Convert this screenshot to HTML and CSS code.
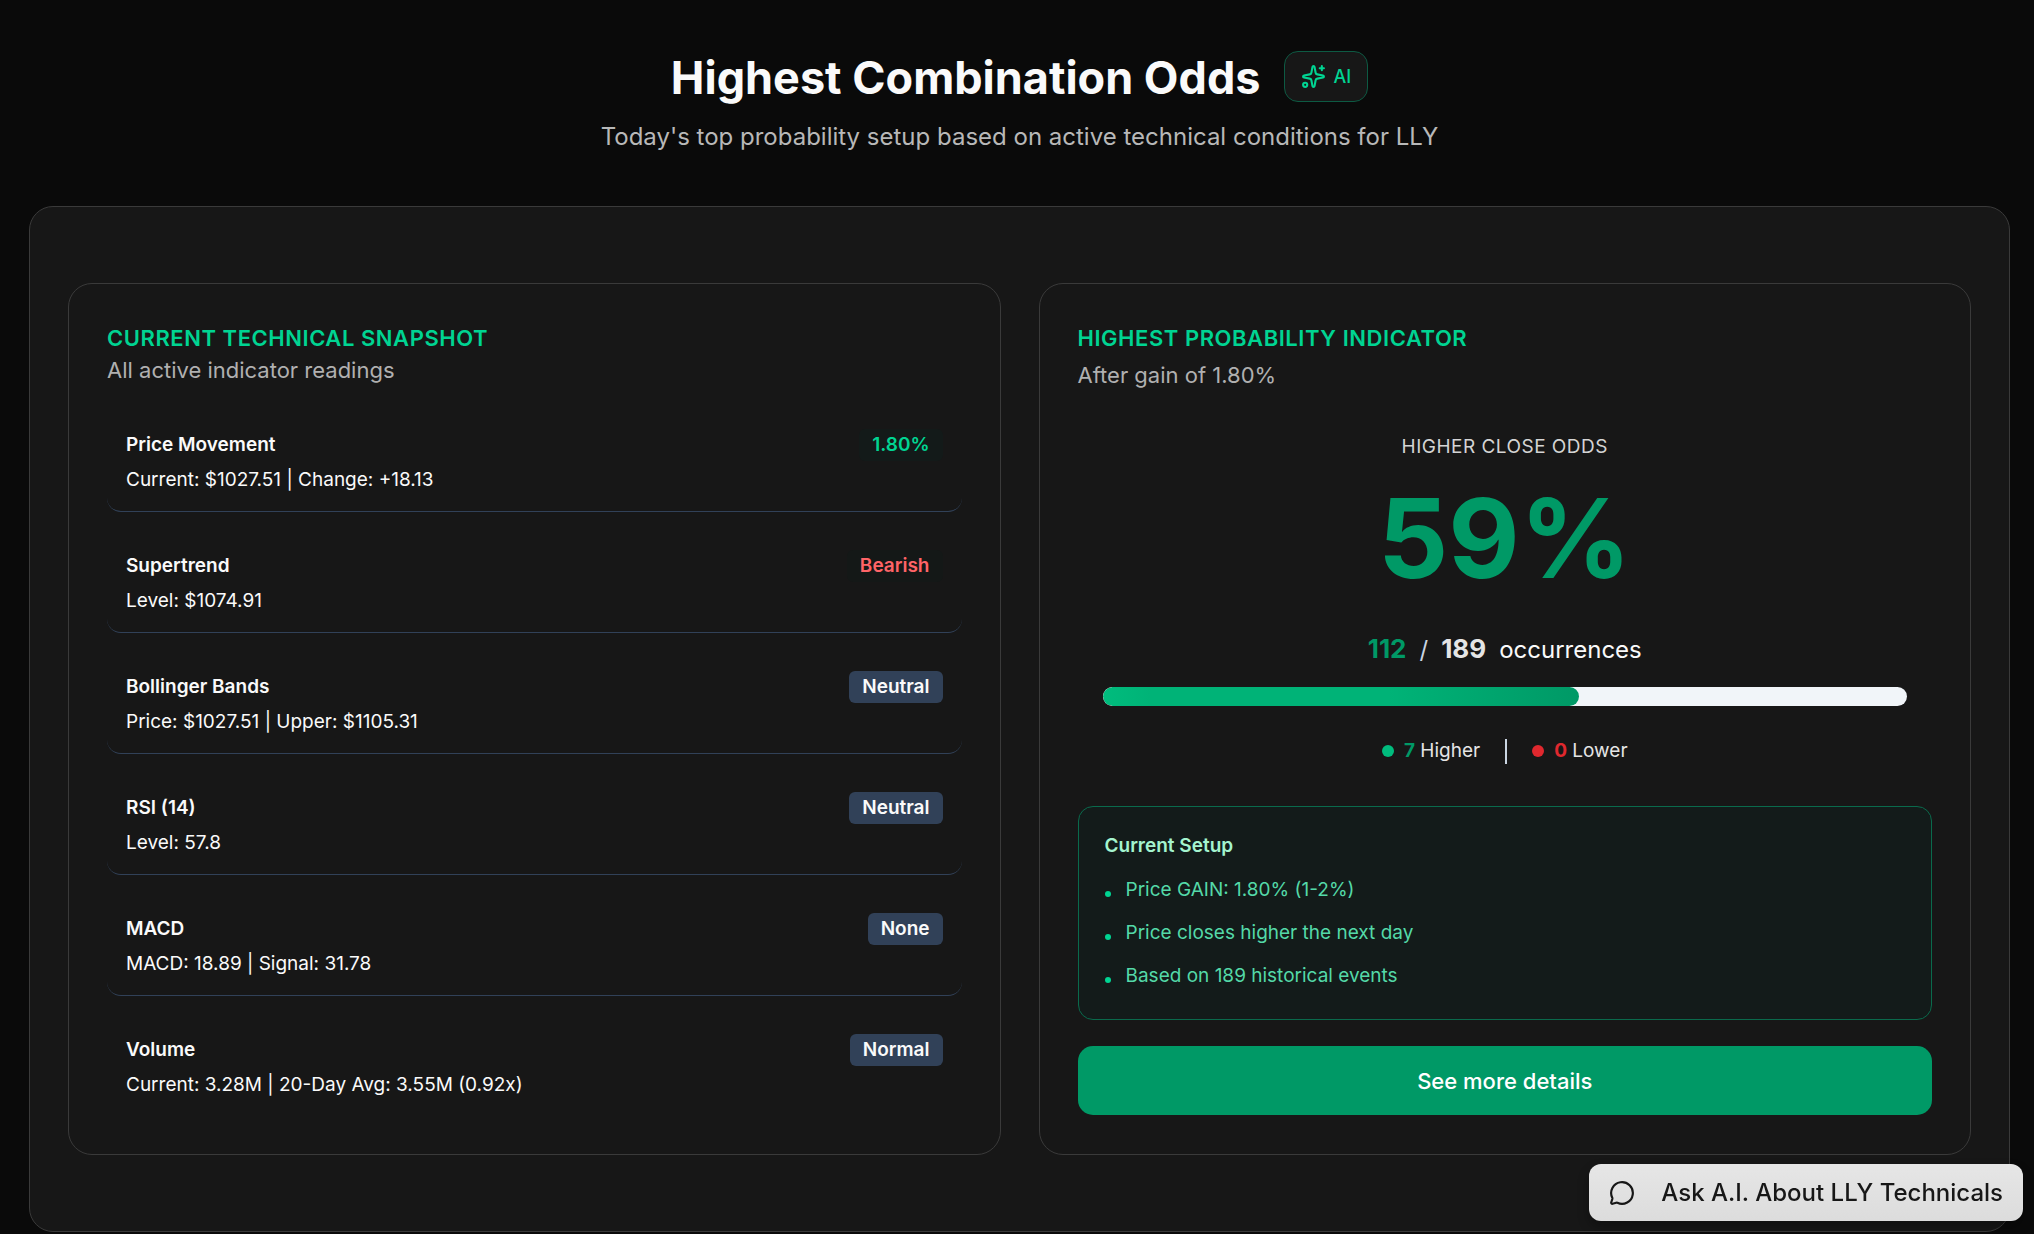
FILE: index.html
```html
<!DOCTYPE html>
<html lang="en">
<head>
  <meta charset="UTF-8" />
  <meta name="viewport" content="width=device-width, initial-scale=1" />
  <title>Highest Combination Odds - LLY</title>
  <link rel="stylesheet" href="styles.css">
</head>
<body>

  <main class="page">

    <!-- HEADER -->
    <header class="header">
      <div class="title-row">
        <h1>Highest Combination Odds</h1>
        <span class="ai-badge">
          <svg class="ai-icon" viewBox="0 0 24 24" aria-hidden="true">
            <path d="M11.017 2.814a1 1 0 0 1 1.966 0l1.051 5.558a2 2 0 0 0 1.594 1.594l5.558 1.051a1 1 0 0 1 0 1.966l-5.558 1.051a2 2 0 0 0-1.594 1.594l-1.051 5.558a1 1 0 0 1-1.966 0l-1.051-5.558a2 2 0 0 0-1.594-1.594l-5.558-1.051a1 1 0 0 1 0-1.966l5.558-1.051a2 2 0 0 0 1.594-1.594z" />
            <path d="M20 2v4" />
            <path d="M22 4h-4" />
            <circle cx="4" cy="20" r="2" />
          </svg>
          AI
        </span>
      </div>
      <p class="subtitle">Today's top probability setup based on active technical conditions for LLY</p>
    </header>

    <section class="card">

      <!-- SNAPSHOT -->
      <section class="panel" aria-labelledby="snapshotTitle">
        <h2 id="snapshotTitle">Current Technical Snapshot</h2>
        <p class="panel-sub">All active indicator readings</p>

        <ul class="indicators">
          <li class="indicator">
            <div class="indicator-top">
              <h3>Price Movement</h3>
              <span class="tag tag-up">1.80%</span>
            </div>
            <p>Current: $1027.51 | Change: +18.13</p>
          </li>
          <li class="indicator">
            <div class="indicator-top">
              <h3>Supertrend</h3>
              <span class="tag tag-down">Bearish</span>
            </div>
            <p>Level: $1074.91</p>
          </li>
          <li class="indicator">
            <div class="indicator-top">
              <h3>Bollinger Bands</h3>
              <span class="tag">Neutral</span>
            </div>
            <p>Price: $1027.51 | Upper: $1105.31</p>
          </li>
          <li class="indicator">
            <div class="indicator-top">
              <h3>RSI (14)</h3>
              <span class="tag">Neutral</span>
            </div>
            <p>Level: 57.8</p>
          </li>
          <li class="indicator">
            <div class="indicator-top">
              <h3>MACD</h3>
              <span class="tag">None</span>
            </div>
            <p>MACD: 18.89 | Signal: 31.78</p>
          </li>
          <li class="indicator">
            <div class="indicator-top">
              <h3>Volume</h3>
              <span class="tag">Normal</span>
            </div>
            <p>Current: 3.28M | 20-Day Avg: 3.55M (0.92x)</p>
          </li>
        </ul>
      </section>

      <!-- PROBABILITY -->
      <section class="panel" aria-labelledby="probabilityTitle">
        <h2 id="probabilityTitle">Highest Probability Indicator</h2>
        <p class="panel-sub panel-sub-spaced">After gain of 1.80%</p>

        <div class="odds">
          <p class="odds-label">Higher Close Odds</p>
          <p class="odds-value">59%</p>
          <p class="occurrences">
            <strong class="hits">112</strong>
            <span class="slash">/</span>
            <strong class="total">189</strong>
            <span>occurrences</span>
          </p>
          <div class="bar" role="progressbar" aria-label="Higher close odds" aria-valuenow="59" aria-valuemin="0" aria-valuemax="100">
            <div class="bar-fill" style="width: 59.26%"></div>
          </div>
          <div class="legend">
            <span class="legend-item"><i class="dot dot-up"></i><span><b class="up">7</b> Higher</span></span>
            <span class="divider"></span>
            <span class="legend-item"><i class="dot dot-down"></i><span><b class="down">0</b> Lower</span></span>
          </div>
        </div>

        <div class="setup">
          <h3>Current Setup</h3>
          <ul>
            <li>Price GAIN: 1.80% (1-2%)</li>
            <li>Price closes higher the next day</li>
            <li>Based on 189 historical events</li>
          </ul>
        </div>

        <button type="button" class="details-btn">See more details</button>
      </section>

    </section>
  </main>

  <!-- Floating chat button -->
  <button type="button" class="ask-btn">
    <svg class="ask-icon" viewBox="0 0 24 24" aria-hidden="true">
      <path d="M2.992 16.342a2 2 0 0 1 .094 1.167l-1.065 3.29a1 1 0 0 0 1.236 1.168l3.413-.998a2 2 0 0 1 1.099.092 10 10 0 1 0-4.777-4.719" />
    </svg>
    Ask A.I. About LLY Technicals
  </button>

</body>
</html>
```

FILE: styles.css
```css
* {
  box-sizing: border-box;
  margin: 0;
  padding: 0;
}

body {
  background: #0a0a0a;
  color: #fafafa;
  font-family: Inter, "Liberation Sans", sans-serif;
  font-size: 19px;
  line-height: 26px;
}

ul {
  list-style: none;
}

svg {
  fill: none;
  stroke: currentColor;
  stroke-width: 2;
  stroke-linecap: round;
  stroke-linejoin: round;
}

.page {
  padding: 51px 24px 2px 29px;
}

/* Header */
.header {
  text-align: center;
  padding-bottom: 52px;
}

.title-row {
  display: flex;
  justify-content: center;
  align-items: center;
  gap: 24px;
}

h1 {
  padding-top: 3px;
  font-size: 45px;
  line-height: 48px;
  font-weight: 700;
}

.ai-badge {
  display: flex;
  align-items: center;
  gap: 7px;
  height: 51px;
  padding: 0 16px;
  border: 1px solid #0d5a43;
  border-radius: 14px;
  background: #171717;
  color: #00d492;
  font-size: 18px;
  font-weight: 500;
}

.ai-icon {
  width: 25px;
  height: 25px;
}

.subtitle {
  margin-top: 18px;
  font-size: 24px;
  line-height: 34px;
  color: #b8b8b8;
}

/* Card and panels */
.card {
  display: grid;
  grid-template-columns: 1fr 1fr;
  gap: 38px;
  padding: 76px 38px;
  background: #171717;
  border: 1px solid #3a3a3a;
  border-radius: 24px;
}

.panel {
  display: flex;
  flex-direction: column;
  padding: 38px;
  border: 1px solid #3a3a3a;
  border-radius: 24px;
}

h2 {
  font-size: 22px;
  line-height: 32px;
  font-weight: 600;
  letter-spacing: 0.025em;
  text-transform: uppercase;
  color: #00d492;
}

h3 {
  font-size: 19px;
  line-height: 28px;
  font-weight: 600;
}

.panel-sub {
  font-size: 22px;
  line-height: 32px;
  color: #b0b0b0;
}

.panel-sub-spaced {
  margin-top: 5px;
}

/* Indicator list */
.indicators {
  display: flex;
  flex-direction: column;
  gap: 19px;
  margin-top: 24px;
}

.indicator {
  padding: 19px 19px 18px;
  border-bottom: 1px solid #314158;
  border-radius: 14px;
}

.indicator:last-child {
  border-bottom: none;
}

.indicator-top {
  display: flex;
  justify-content: space-between;
  align-items: center;
  margin-bottom: 6px;
}

.tag {
  padding: 0 13px;
  border-radius: 6px;
  background: #314158;
  font-weight: 600;
  line-height: 32px;
}

.tag-up {
  background: #131a19;
  color: #00d492;
}

.tag-down {
  background: #141817;
  color: #ff6467;
}

/* Odds */
.odds {
  margin-top: 42px;
  padding: 0 25px;
  text-align: center;
}

.odds-label {
  line-height: 28px;
  letter-spacing: 0.025em;
  text-transform: uppercase;
  color: #d4d4d4;
}

.odds-value {
  margin-top: 22px;
  font-size: 110px;
  line-height: 110px;
  font-weight: 700;
  color: #009966;
}

.occurrences {
  display: flex;
  justify-content: center;
  align-items: baseline;
  gap: 13px;
  margin-top: 39px;
  font-size: 24px;
  line-height: 34px;
}

.occurrences strong {
  font-size: 26px;
  font-weight: 700;
}

.hits,
.up {
  color: #009966;
}

.slash {
  color: #cad5e2;
}

.total {
  color: #e5e5e5;
}

.bar {
  height: 19px;
  margin-top: 20px;
  border-radius: 10px;
  background: #f1f5f9;
  overflow: hidden;
}

.bar-fill {
  height: 100%;
  border-radius: 10px;
  background: linear-gradient(90deg, #00bc7d, #00b377 10%, #00b377 60%, #009966);
}

.legend {
  display: flex;
  justify-content: center;
  align-items: center;
  gap: 25px;
  margin-top: 32px;
  color: #e5e5e5;
}

.legend-item {
  display: flex;
  align-items: center;
  gap: 10px;
}

.dot {
  width: 12px;
  height: 12px;
  border-radius: 50%;
}

.dot-up {
  background: #00bc7d;
}

.dot-down {
  background: #e0282e;
}

.down {
  color: #e0282e;
}

.divider {
  width: 2px;
  height: 25px;
  background: #cad5e2;
}

/* Current setup */
.setup {
  margin-top: 42px;
  padding: 25px 26px 29px;
  border: 1px solid #0a6a4c;
  border-radius: 15px;
  background: #131b1a;
}

.setup h3 {
  color: #a4f4cf;
}

.setup ul {
  display: flex;
  flex-direction: column;
  gap: 15px;
  margin-top: 16px;
}

.setup li {
  display: flex;
  align-items: center;
  gap: 15px;
  line-height: 28px;
  color: #54d9a8;
}

.setup li::before {
  content: "";
  width: 6px;
  height: 6px;
  margin-top: 7px;
  border-radius: 50%;
  background: #00d492;
}

button {
  border: none;
  font-family: inherit;
  font-weight: 500;
  cursor: pointer;
}

.details-btn {
  height: 69px;
  margin-top: 26px;
  border-radius: 15px;
  background: #009966;
  color: #fff;
  font-size: 22px;
}

.details-btn:hover {
  background: #007a55;
}

.ask-btn {
  position: fixed;
  right: 11px;
  bottom: 13px;
  display: flex;
  align-items: center;
  gap: 26px;
  height: 57px;
  padding: 0 20px;
  border-radius: 12px;
  background: linear-gradient(#e6e6e6, #dcdcdc);
  box-shadow: 0 6px 12px rgba(0, 0, 0, 0.3);
  color: #171717;
  font-size: 24px;
}

.ask-icon {
  width: 26px;
  height: 26px;
}
```
